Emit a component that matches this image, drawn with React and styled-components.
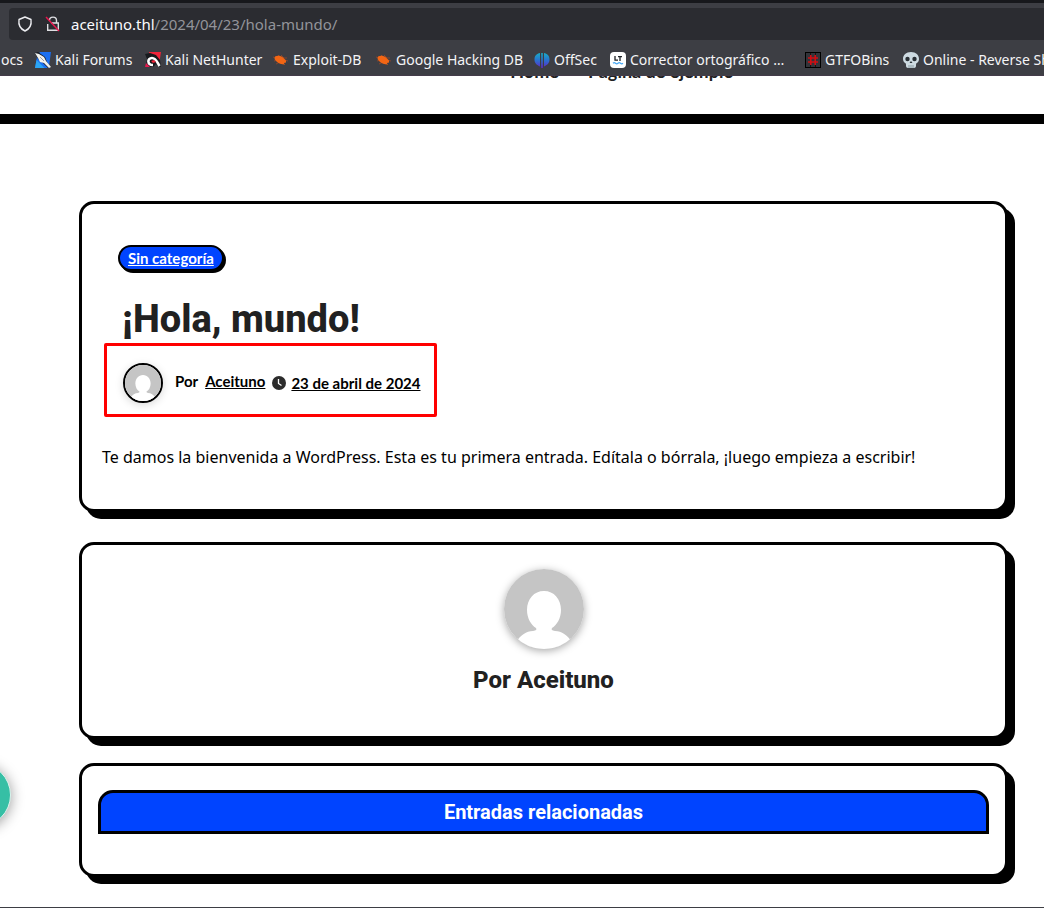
import React from "react";
import styled, { createGlobalStyle } from "styled-components";

const Global = createGlobalStyle`
  *, *::before, *::after { box-sizing: border-box; }
  body { margin: 0; background: #fff; color: #000; font-family: Lato, "Open Sans", sans-serif; }
  h1, h2, p, ul { margin: 0; padding: 0; }
  a { color: inherit; }
`;

const Page = styled.div`
  position: relative;
  min-height: 100vh;
  display: flex;
  flex-direction: column;
  overflow: hidden;
  border-bottom: 1px solid #3d3e44;
`;

const Browser = styled.header`
  position: relative;
  z-index: 1;
  padding-top: 5px;
  border-top: 3px solid #17181c;
  border-bottom: 1px solid #443c4a;
  background: #3d3e44;
  font-family: "Noto Sans", sans-serif;
  font-size: 15px;
  line-height: 20px;
  color: #f4f4f6;
`;

const AddressBar = styled.div`
  display: flex;
  align-items: center;
  height: 32px;
  margin-left: 9px;
  padding-left: 8px;
  background: #2b2c31;
  border-radius: 4px 0 0 4px;
`;

const AddressIcon = styled.svg`
  width: 16px;
  height: 16px;
  margin-right: ${(p) => p.$gap}px;
  flex: none;
`;

const Url = styled.span`
  color: #93949a;
  white-space: nowrap;
`;

const Host = styled.span`
  color: #fbfbfe;
`;

const Bookmarks = styled.ul`
  display: flex;
  gap: 12px;
  height: 35px;
  padding: 4px 0 0 1px;
  align-items: center;
  overflow: hidden;
  list-style: none;
  font-size: 14px;
  white-space: nowrap;
`;

const Bookmark = styled.li`
  flex: none;
  width: ${(p) => p.$width}px;
`;

const BookmarkLink = styled.a`
  display: flex;
  align-items: center;
  gap: 4px;
  text-decoration: none;
  svg { width: 16px; height: 16px; flex: none; }
`;

const SiteHeader = styled.div`
  display: flex;
  justify-content: center;
  height: 48px;
  padding-left: 200px;
  border-bottom: 10px solid #000;
`;

const Menu = styled.nav`
  display: flex;
  gap: 29px;
  margin-top: -17px;
  font-size: 18px;
  font-weight: 700;
  line-height: 24px;
  color: #212121;
  a { text-decoration: none; }
`;

const Main = styled.main`
  display: flex;
  flex-direction: column;
  padding: 77px 36px 30px 79px;
`;

const Card = styled.section`
  padding: ${(p) => p.$pad};
  margin-bottom: ${(p) => p.$gap || 0}px;
  border: 3px solid #000;
  border-radius: 15px;
  background: #fff;
  box-shadow: 7px 7px 0 #000;
`;

const Category = styled.a`
  display: block;
  width: fit-content;
  margin-left: 16px;
  padding: 0 8px;
  border: 2px solid #000;
  border-radius: 14px;
  background: #0044ff;
  box-shadow: 2px 2px 0 #000;
  color: #fff;
  font-size: 15px;
  font-weight: 700;
  line-height: 22px;
`;

const Title = styled.h1`
  margin: 25px 0 1px 20px;
  font-family: Roboto, sans-serif;
  font-size: 38px;
  font-weight: 800;
  line-height: 46px;
  color: #212121;
`;

const Meta = styled.div`
  display: flex;
  align-items: center;
  width: fit-content;
  height: 74px;
  margin-left: 2px;
  padding: 6px 13px 0 16px;
  border: 3px solid #ff0000;
  border-radius: 2px;
  font-size: 15px;
  font-weight: 700;
  line-height: 20px;
  white-space: nowrap;
`;

const Portrait = styled.svg`
  display: block;
  flex: none;
  width: ${(p) => p.$size}px;
  height: ${(p) => p.$size}px;
  border: ${(p) => (p.$ring ? "2px solid #000" : "0")};
  border-radius: 50%;
  box-shadow: 0 2px 8px ${(p) => (p.$ring ? "rgba(0, 0, 0, 0.15)" : "rgba(0, 0, 0, 0.35)")};
`;

const Author = styled.span`
  display: flex;
  gap: 7px;
  margin: 0 7px 0 12px;
  padding-bottom: 4px;
`;

const PostDate = styled.a`
  margin-left: 5px;
`;

const Excerpt = styled.p`
  margin-top: 26px;
  font-family: "Noto Sans", sans-serif;
  font-size: 16px;
  line-height: 28px;
`;

const AuthorCard = styled(Card)`
  display: flex;
  flex-direction: column;
  align-items: center;
`;

const AuthorName = styled.h2`
  margin-top: 17px;
  font-family: Roboto, sans-serif;
  font-size: 24px;
  font-weight: 800;
  line-height: 28px;
  color: #212121;
`;

const Related = styled.h2`
  border: 3px solid #000;
  border-radius: 15px 15px 0 0;
  background: #0044ff;
  color: #fff;
  font-family: Roboto, sans-serif;
  font-size: 20px;
  font-weight: 700;
  line-height: 38px;
  text-align: center;
`;

const Bubble = styled.button`
  position: fixed;
  left: -53px;
  bottom: 81px;
  width: 64px;
  height: 64px;
  padding: 0;
  border: 1px solid #d9f3ec;
  border-radius: 50%;
  background: #36bfa5;
  box-shadow: 0 2px 14px rgba(0, 0, 0, 0.4);
`;

const Avatar = ({ size, ring }) => (
  <Portrait $size={size} $ring={ring} viewBox="0 0 80 80" role="img" aria-label="Aceituno">
    <rect width="80" height="80" fill="#c5c5c5" />
    <path fill="#fff" d="M40 22c-10 0-17 8-17 19 0 8 4 15 9 18 1 2 0 2-3 3-7 0-12 4-17 11v7h56v-7c-5-7-10-11-17-11-3-1-4-1-3-3 5-3 9-10 9-18 0-11-7-19-17-19z" />
  </Portrait>
);

const ForumsIcon = () => (
  <svg viewBox="0 0 16 16">
    <path fill="#1c6ff0" d="M5 0h11l-2 14-1 2H0L2 5z" />
    <path fill="#2ba5f4" d="M1.500 8l8 8H0z" />
    <path fill="#151820" d="M0 1l3-1 7 5 2 5 3 5-2 1-5-5-5-4z" />
    <path fill="#f1f1ee" d="M0 1l4 1 5 3 2 4 5 6-2 1-5-5-4-1-2-4z" />
    <path stroke="#8a8d92" strokeWidth=".8" d="M5 5l4 4" />
  </svg>
);

const NetHunterIcon = () => (
  <svg viewBox="0 0 16 16">
    <path fill="#f0243a" d="M4 0h12l-2 13-4-6-6-2z" />
    <path fill="#17191d" d="M0 2l5-1 6 2 4 5 1 7-3-1-2-2-3 3H4l-3-3 1-5z" />
    <path fill="#e7194f" d="M0 15l1-4 4 4z" />
    <path fill="none" stroke="#fff" strokeWidth="2.600" d="M8 13C2 13 2 6 7 6c4 0 5 4 7.500 8" />
    <path fill="#f0243a" d="M6 9l3-1 2 2-3 1z" />
  </svg>
);

const BugIcon = () => (
  <svg viewBox="0 0 16 16">
    <path fill="none" stroke="#9b4827" strokeWidth=".8" d="M0 5l3 1M1 9l4-1M3 12l4-2M5 3l3 3M8 3l3 3M9 10l3 3M11 8l4 1M10 6h4" />
    <path fill="#f26514" d="M2 4.500c2-1 6-1 8 1l3 3v2l-2 .500.500 1.500c-3 0-6-1-8-3L1.500 7z" />
  </svg>
);

const OffSecIcon = () => (
  <svg viewBox="0 0 16 16">
    <defs>
      <linearGradient id="offsec" gradientUnits="userSpaceOnUse" x1="0" y1="0" x2="0" y2="16">
        <stop stopColor="#16b4c6" />
        <stop offset=".5" stopColor="#2874cf" />
        <stop offset="1" stopColor="#6027c9" />
      </linearGradient>
    </defs>
    <path fill="url(#offsec)" d="M7.200 1h1.600v15H7.200zM6 1v13.500C3 13 .5 11.500.500 7.500S3 1.500 6 1zM10 1c3 .5 5.500 2.500 5.500 6.500S13 13 10 14.500z" />
  </svg>
);

const ToolIcon = () => (
  <svg viewBox="0 0 16 16">
    <rect width="16" height="16" rx="4" fill="#fff" />
    <path fill="none" stroke="#1f2227" strokeWidth="1.300" d="M5 4v4.200h3M8 4.700h4M10 4.500V9" />
    <path fill="none" stroke="#48a9f5" strokeWidth="1.200" d="M3 11.200q1.250-1.200 2.500 0t2.500 0 2.500 0 2.500 0" />
  </svg>
);

const HashIcon = () => (
  <svg viewBox="0 0 16 16">
    <rect x=".5" y=".5" width="15" height="15" fill="#33343a" stroke="#000" />
    <path stroke="#151515" d="M5.500 1v2M10.500 1v2M5.500 13v2M10.500 13v2" />
    <path stroke="#d30d12" strokeWidth="1.600" d="M5.800 3v10M10.200 3v10M3 6h10M3 10h10" />
  </svg>
);

const SkullIcon = () => (
  <svg viewBox="0 0 16 16">
    <path fill="#cddae1" d="M8 0C3 0 0 3 0 7c0 2 1 3 2 4 1 0 1 1 1 3 0 1 1 2 2 2h6c1 0 2-1 2-2 0-2 0-3 1-3 1-1 2-2 2-4 0-4-3-7-8-7z" />
    <circle cx="4.500" cy="7" r="2.200" fill="#2a3036" />
    <circle cx="11.500" cy="7" r="2.200" fill="#2a3036" />
    <path fill="#2a3036" d="M8 9l1.500 2h-3z" />
    <path stroke="#71818b" strokeWidth=".7" d="M6 13v3M8 13v3M10 13v3" />
  </svg>
);

const bookmarks = [
  { label: "ocs", width: 22 },
  { label: "Kali Forums", width: 98, Icon: ForumsIcon },
  { label: "Kali NetHunter", width: 116, Icon: NetHunterIcon },
  { label: "Exploit-DB", width: 91, Icon: BugIcon },
  { label: "Google Hacking DB", width: 146, Icon: BugIcon },
  { label: "OffSec", width: 64, Icon: OffSecIcon },
  { label: "Corrector ortográfico …", width: 183, Icon: ToolIcon },
  { label: "GTFOBins", width: 86, Icon: HashIcon },
  { label: "Online - Reverse Shell", width: 180, Icon: SkullIcon },
];

export default function App() {
  return (
    <Page>
      <Global />
      <Browser>
        <AddressBar>
          <AddressIcon $gap={12} viewBox="0 0 16 16" fill="none" stroke="#ececf0" strokeWidth="1.400">
            <path d="M8 1l6 2.500c.7 5-1.500 9.500-6 11.500-4.500-2-6.700-6.500-6-11.500z" strokeLinejoin="round" />
          </AddressIcon>
          <AddressIcon $gap={10} viewBox="0 0 16 16" fill="none" stroke="#dedee2" strokeWidth="1.400">
            <path d="M4.500 4.500C4.500 0 11.500 0 11.500 4.500V7M6 7h7.300v7.300H2.700V8" />
            <path stroke="#e5174d" strokeWidth="1.500" d="M1 1l13 14" />
          </AddressIcon>
          <Url><Host>aceituno.thl</Host>/2024/04/23/hola-mundo/</Url>
        </AddressBar>
        <Bookmarks>
          {bookmarks.map(({ label, width, Icon }) => (
            <Bookmark key={label} $width={width}>
              <BookmarkLink href="#">{Icon && <Icon />}{label}</BookmarkLink>
            </Bookmark>
          ))}
        </Bookmarks>
      </Browser>
      <SiteHeader>
        <Menu>
          <a href="#">Home</a>
          <a href="#">Página de ejemplo</a>
        </Menu>
      </SiteHeader>
      <Main>
        <Card $pad="41px 20px 38px" $gap={30}>
          <Category href="#">Sin categoría</Category>
          <Title>¡Hola, mundo!</Title>
          <Meta>
            <Avatar size={40} ring />
            <Author>Por <a href="#">Aceituno</a></Author>
            <svg width="14" height="14" viewBox="0 0 14 14">
              <circle cx="7" cy="7" r="7" fill="#2c2c2c" />
              <path d="M6.500 3v4.500l3 2" fill="none" stroke="#fff" strokeWidth="1.300" />
            </svg>
            <PostDate href="#">23 de abril de 2024</PostDate>
          </Meta>
          <Excerpt>Te damos la bienvenida a WordPress. Esta es tu primera entrada. Edítala o bórrala, ¡luego empieza a escribir!</Excerpt>
        </Card>
        <AuthorCard $pad="24px 20px 42px" $gap={24}>
          <Avatar size={80} />
          <AuthorName>Por Aceituno</AuthorName>
        </AuthorCard>
        <Card $pad="24px 16px 40px">
          <Related>Entradas relacionadas</Related>
        </Card>
      </Main>
      <Bubble aria-label="Chat" />
    </Page>
  );
}
